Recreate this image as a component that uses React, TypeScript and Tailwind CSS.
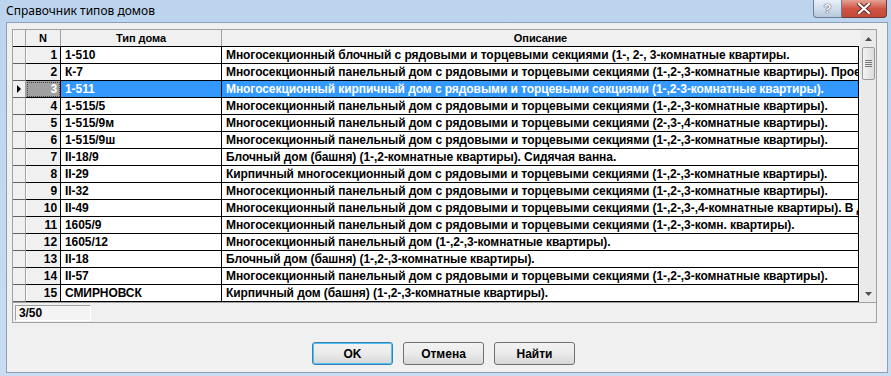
import React from "react";

const rows: [number, string, string][] = [
  [1, "1-510", "Многосекционный блочный с рядовыми и торцевыми секциями (1-, 2-, 3-комнатные квартиры."],
  [2, "К-7", "Многосекционный панельный дом с рядовыми и торцевыми секциями (1-,2-,3-комнатные квартиры). Проектом предусмотрены"],
  [3, "1-511", "Многосекционный кирпичный дом с рядовыми и торцевыми секциями (1-,2-3-комнатные квартиры)."],
  [4, "1-515/5", "Многосекционный панельный дом с рядовыми и торцевыми секциями (1-,2-,3-комнатные квартиры)."],
  [5, "1-515/9м", "Многосекционный панельный дом с рядовыми и торцевыми секциями (2-,3-,4-комнатные квартиры)."],
  [6, "1-515/9ш", "Многосекционный панельный дом с рядовыми и торцевыми секциями (1-,2-,3-комнатные квартиры)."],
  [7, "II-18/9", "Блочный дом (башня) (1-,2-комнатные квартиры). Сидячая ванна."],
  [8, "II-29", "Кирпичный многосекционный дом с рядовыми и торцевыми секциями (1-,2-,3-комнатные квартиры)."],
  [9, "II-32", "Многосекционный панельный дом с рядовыми и торцевыми секциями (1-,2-,3-комнатные квартиры)."],
  [10, "II-49", "Многосекционный панельный дом с рядовыми и торцевыми секциями (1-,2-,3-,4-комнатные квартиры). В доме"],
  [11, "1605/9", "Многосекционный панельный дом с рядовыми и торцевыми секциями (1-,2-,3-комн. квартиры)."],
  [12, "1605/12", "Многосекционный панельный дом (1-,2-,3-комнатные квартиры)."],
  [13, "II-18", "Блочный дом (башня) (1-,2-,3-комнатные квартиры)."],
  [14, "II-57", "Многосекционный панельный дом с рядовыми и торцевыми секциями (1-,2-,3-комнатные квартиры)."],
  [15, "СМИРНОВСК", "Кирпичный дом (башня) (1-,2-,3-комнатные квартиры)."],
];

const selected = 3;

export default function App() {
  return (
    <div className="w-[891px] h-[376px] overflow-hidden flex flex-col bg-gradient-to-b from-[#bcd4ee] to-[#c9dcf1] font-['Liberation_Sans',Arial,sans-serif]">
      <TitleBar />
      <div className="flex-1 flex pl-[6px] pb-[3px]">
        <div className="w-[882px] flex flex-col bg-[#f0f0f0] border border-[#8a9fb8]">
          <div className="pl-[5px] pt-[6px]">
            <Grid />
          </div>
          <Buttons />
        </div>
      </div>
    </div>
  );
}

function TitleBar() {
  return (
    <div className="h-[22px] flex items-start">
      <div className="pl-[6px] pt-[3px] text-[12px] text-black font-['Noto_Sans',sans-serif] leading-[15px]">
        Справочник типов домов
      </div>
      <div className="ml-auto mr-[4px] flex">
        <div className="w-[29px] h-[18px] rounded-bl-[4px] border border-t-0 border-[#6b7d95] bg-gradient-to-b from-[#e9f0f8] to-[#b7c9de] flex items-center justify-center text-[13px] font-bold text-white [text-shadow:0_0_1px_#334,0_0_1px_#334]">
          ?
        </div>
        <div className="w-[45px] h-[18px] rounded-br-[4px] border border-t-0 border-l-0 border-[#6b3a33] bg-gradient-to-b from-[#e3a294] via-[#cf5443] to-[#c14a38] flex items-center justify-center">
          <svg width="14" height="11" viewBox="0 0 14 11">
            <path d="M2 1 L12 10 M12 1 L2 10" stroke="#5a2a22" strokeWidth="4" strokeLinecap="square" />
            <path d="M2 1 L12 10 M12 1 L2 10" stroke="#ffffff" strokeWidth="2.2" strokeLinecap="square" />
          </svg>
        </div>
      </div>
    </div>
  );
}

function Grid() {
  return (
    <div className="w-[865px] border border-[#a0a0a0] bg-white text-[12px] tracking-[-0.07px] font-bold text-black">
      <div className="flex">
        <div className="w-[846px]">
          {/* header */}
          <div className="flex h-[17px] border-b border-black bg-[#f0f0f0] text-[11px]">
            <div className="w-[13px] border-r border-[#a0a0a0] border-l border-l-white" />
            <div className="w-[35px] border-r border-[#a0a0a0] flex items-center justify-center">N</div>
            <div className="w-[161px] border-r border-[#a0a0a0] flex items-center justify-center">Тип дома</div>
            <div className="w-[637px] flex items-center justify-center">Описание</div>
          </div>
          {rows.map(([n, type, desc]) => {
            const sel = n === selected;
            return (
              <div key={n} className="flex h-[17px] leading-[16px]">
                <div className="w-[13px] border-r border-b border-[#a0a0a0] border-b-[#606060] bg-[#f0f0f0] flex items-center justify-center">
                  {sel && (
                    <svg width="5" height="8" viewBox="0 0 5 8">
                      <path d="M0 0 L4 4 L0 8 Z" fill="#000" />
                    </svg>
                  )}
                </div>
                <div
                  className={
                    sel
                      ? "w-[35px] border-r border-b border-black bg-[#a0a0a0] text-white text-right pr-[3px] outline-1 outline-dotted outline-offset-[-2px] outline-[#444]"
                      : "w-[35px] border-r border-b border-black bg-[#f0f0f0] text-right pr-[3px] shadow-[inset_1px_0_0_#ffffff]"
                  }
                >
                  {n}
                </div>
                <div
                  className={
                    sel
                      ? "w-[161px] border-r border-b border-black bg-[#3399ff] text-white pl-[4px] whitespace-nowrap overflow-hidden"
                      : "w-[161px] border-r border-b border-black pl-[4px] whitespace-nowrap overflow-hidden"
                  }
                >
                  {type}
                </div>
                <div
                  className={
                    sel
                      ? "w-[637px] border-b border-r border-black bg-[#3399ff] text-white pl-[4px] whitespace-nowrap overflow-hidden"
                      : "w-[637px] border-b border-r border-black pl-[4px] whitespace-nowrap overflow-hidden"
                  }
                >
                  {desc}
                </div>
              </div>
            );
          })}
        </div>
        <Scrollbar />
      </div>
      <div className="h-[20px] border-t border-[#a0a0a0] bg-[#f0f0f0] flex items-center pl-[2px]">
        <div className="w-[76px] h-[16px] border border-t-[#a0a0a0] border-l-[#a0a0a0] border-b-white border-r-white bg-[#f4f4f4] pl-[3px] leading-[14px]">
          3/50
        </div>
      </div>
    </div>
  );
}

function Scrollbar() {
  return (
    <div className="w-[17px] bg-[#eaeaea] flex flex-col items-center border-l border-[#f4f4f4]">
      <div className="h-[17px] flex items-center justify-center">
        <svg width="7" height="4" viewBox="0 0 7 4">
          <path d="M0 4 L3.5 0 L7 4 Z" fill="#505050" />
        </svg>
      </div>
      <div className="w-[13px] h-[33px] rounded-[2px] border border-[#9a9a9a] bg-gradient-to-r from-[#f3f3f3] to-[#dcdcdc] flex flex-col items-center justify-center gap-[1px]">
        <div className="w-[7px] h-[1px] bg-[#777]" />
        <div className="w-[7px] h-[1px] bg-[#777]" />
        <div className="w-[7px] h-[1px] bg-[#777]" />
        <div className="w-[7px] h-[1px] bg-[#777]" />
      </div>
      <div className="flex-1" />
      <div className="h-[17px] flex items-center justify-center">
        <svg width="7" height="4" viewBox="0 0 7 4">
          <path d="M0 0 L3.5 4 L7 0 Z" fill="#505050" />
        </svg>
      </div>
    </div>
  );
}

function Buttons() {
  const base =
    "w-[81px] h-[23px] rounded-[3px] bg-gradient-to-b from-[#f2f2f2] via-[#ebebeb] to-[#d6d6d6] text-[12px] font-bold text-black flex items-center justify-center";
  return (
    <div className="flex gap-[10px] pl-[305px] pt-[19px]">
      <div className={base + " border border-[#3c7fb1] shadow-[inset_0_0_0_1px_#4cc5f5]"}>OK</div>
      <div className={base + " border border-[#707070]"}>Отмена</div>
      <div className={base + " border border-[#707070]"}>Найти</div>
    </div>
  );
}
